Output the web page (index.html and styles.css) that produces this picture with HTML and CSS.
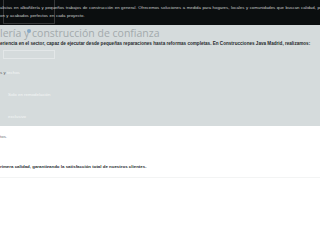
FILE: index.html
```html
<!DOCTYPE html>
<html lang="es">
<head>
<meta charset="utf-8">
<link rel="stylesheet" href="styles.css">
</head>
<body>
<header class="topbar">
  <p class="intro">alistas en albañilería y pequeños trabajos de construcción en general. Ofrecemos soluciones a medida para hogares, locales y comunidades que buscan calidad, pr</p>
  <p class="intro">on y acabados perfectos en cada proyecto.</p>
  <span class="outline"></span>
</header>
<section class="band">
  <h1 class="title">lería y<span class="dot"></span> construcción de confianza</h1>
  <p class="lead">eriencia en el sector, capaz de ejecutar desde pequeñas reparaciones hasta reformas completas. En Construcciones Java Madrid, realizamos:</p>
  <div class="ghost-box"></div>
  <p class="item"><span class="dim">s y</span> <span class="light">techos</span></p>
  <p class="item sub light">Solo en remodelación</p>
  <p class="item sub light">exclusivo</p>
</section>
<section class="plain">
  <p class="tail">tos.</p>
  <p class="closing">rimera calidad, garantizando la satisfacción total de nuestros clientes.</p>
  <div class="rule"></div>
</section>
</body>
</html>
```

FILE: styles.css
```css
html, body {
  margin: 0;
  padding: 0;
  background: #ffffff;
  overflow: hidden;
  width: 320px;
  height: 240px;
  font-family: "Liberation Sans", Arial, sans-serif;
}
p { margin: 0; white-space: nowrap; }
.topbar {
  position: relative;
  background: #0b0e0f;
  height: 25px;
  box-sizing: border-box;
  padding-top: 4px;
}
.intro {
  color: #c9cccd;
  font-size: 4.3px;
  word-spacing: 0.4px;
  line-height: 8px;
}
.outline {
  position: absolute;
  left: 3px;
  top: 0;
  width: 52px;
  height: 24px;
  border: 1px solid rgba(255,255,255,0.18);
  border-top: none;
  box-sizing: border-box;
}
.band {
  background: #d5dbdc;
  height: 101px;
  box-sizing: border-box;
  padding-top: 1px;
}
.title {
  position: relative;
  margin: 0;
  font-family: "Open Sans", sans-serif;
  font-weight: 400;
  font-size: 10.5px;
  line-height: 14px;
  color: #a3aaac;
  white-space: nowrap;
}
.dot {
  position: absolute;
  left: 27px;
  top: 3px;
  width: 4px;
  height: 4px;
  border-radius: 50%;
  background: #86a9c8;
}
.lead {
  margin-top: 1px;
  color: #262a2c;
  font-weight: 700;
  font-size: 4.6px;
  line-height: 6px;
}
.ghost-box {
  margin: 3px 0 0 3px;
  width: 52px;
  height: 9px;
  border: 1px solid #e3e7e8;
  box-sizing: border-box;
}
.item {
  font-size: 4.4px;
  line-height: 6px;
  margin-top: 11px;
}
.item.sub {
  margin-top: 16px;
  padding-left: 8px;
}
.dim { color: #5a6062; }
.light { color: #f4f6f6; }
.plain {
  padding-top: 8px;
}
.tail {
  font-size: 4.4px;
  line-height: 6px;
  color: #6d7274;
}
.closing {
  margin-top: 24px;
  font-size: 4.4px;
  line-height: 6px;
  font-weight: 700;
  color: #2a2e30;
}
.rule {
  margin-top: 7px;
  height: 1px;
  background: #f3f4f4;
}
```
